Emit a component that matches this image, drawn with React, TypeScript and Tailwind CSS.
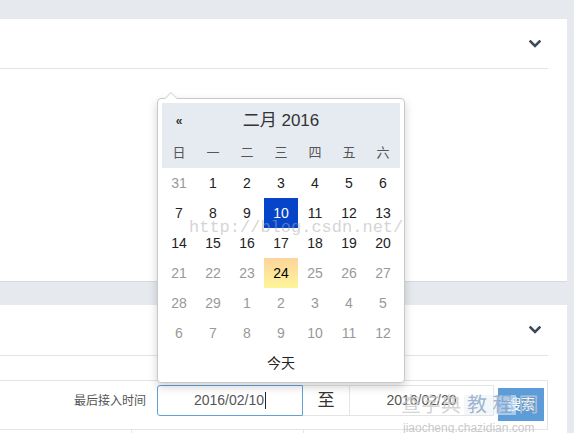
import React from 'react';

const FONT = { fontFamily: '"Liberation Sans", "Noto Sans CJK SC", sans-serif' };

type Day = { n: number; muted: boolean; active?: boolean; today?: boolean };

const WEEKDAYS = ['日', '一', '二', '三', '四', '五', '六'];

// Feb 2016, max selectable date 2016/02/20
const ROWS: Day[][] = (() => {
  const cells: Day[] = [{ n: 31, muted: true }];
  for (let d = 1; d <= 29; d++) cells.push({ n: d, muted: d > 20, active: d === 10, today: d === 24 });
  for (let d = 1; d <= 12; d++) cells.push({ n: d, muted: true });
  const rows: Day[][] = [];
  for (let i = 0; i < 6; i++) rows.push(cells.slice(i * 7, i * 7 + 7));
  return rows;
})();

function Chevron() {
  return (
    <svg width="12" height="8" viewBox="0 0 12 8" aria-hidden>
      <path d="M1.5 1.5 L6 6 L10.5 1.5" fill="none" stroke="#3d4a57" strokeWidth="2.6" strokeLinecap="square" />
    </svg>
  );
}

function Calendar() {
  return (
    <div className="absolute left-[157px] top-[98px] w-[248px] rounded-[4px] border border-[#c9c9c9] bg-white p-[4px] shadow-[0_4px_10px_rgba(0,0,0,0.18)]">
      {/* caret */}
      <div className="absolute -top-[7px] left-[6px] h-0 w-0 border-x-[7px] border-b-[7px] border-x-transparent border-b-[#c9c9c9]" />
      <div className="absolute -top-[6px] left-[7px] h-0 w-0 border-x-[6px] border-b-[6px] border-x-transparent border-b-white" />

      <div className="bg-[#e6ebf2]">
        <div className="flex h-[35px] items-center">
          <div className="flex w-[34px] justify-center text-[12px] font-bold text-[#333]">«</div>
          <div className="flex w-[170px] justify-center text-[17px] text-[#333]">二月 2016</div>
          <div className="w-[34px]" />
        </div>
        <div className="flex h-[30px] items-center">
          {WEEKDAYS.map((w) => (
            <div key={w} className="flex w-[34px] justify-center text-[13px] text-[#555]">
              {w}
            </div>
          ))}
        </div>
      </div>

      {ROWS.map((row, i) => (
        <div key={i} className="flex h-[30px]">
          {row.map((d, j) => (
            <div
              key={j}
              className={`flex w-[34px] items-center justify-center text-[14px] ${
                d.active
                  ? 'bg-[#0645c9] text-white'
                  : d.today
                    ? 'bg-gradient-to-b from-[#fdd49a] to-[#fdf59a] text-black'
                    : d.muted
                      ? 'text-[#999]'
                      : 'text-[#222]'
              }`}
            >
              {d.n}
            </div>
          ))}
        </div>
      ))}

      <div className="flex h-[30px] items-center justify-center text-[14px] text-[#222]">今天</div>
    </div>
  );
}

export default function App() {
  return (
    <div className="relative flex h-[433px] w-[574px] flex-col overflow-hidden bg-[#e6e9ee] pt-[19px]" style={FONT}>
      {/* panel 1 */}
      <section className="h-[264px] w-[567px] border-b border-[#d6dae0] bg-white">
        <div className="mr-[19px] flex h-[50px] items-center justify-end border-b border-[#e4e4e4] pr-[7px]">
          <Chevron />
        </div>
      </section>

      {/* panel 2 */}
      <section className="mt-[23px] flex w-[567px] flex-1 flex-col bg-white">
        <div className="mr-[19px] flex h-[51px] items-center justify-end border-b border-[#e4e4e4] pr-[7px]">
          <Chevron />
        </div>
        <div className="h-[24px]" />
        <div className="flex h-[49px] w-[548px] items-start border-r border-t border-[#e4e4e4] pt-[4px]">
          <div className="flex h-[31px] w-[146px] items-center justify-end text-[12px] text-[#555]">最后接入时间</div>
          <div className="ml-[11px] flex h-[31px]">
            <div className="flex w-[146px] items-center justify-center rounded-l-[3px] border border-[#62a0dc] text-[14px] text-[#555]">
              2016/02/10<span className="ml-[1px] inline-block h-[17px] w-px bg-[#222]" />
            </div>
            <div className="flex w-[46px] items-center justify-center border-y border-[#e4e4e4] text-[17px] text-[#333]">至</div>
            <div className="flex w-[145px] items-center justify-center border border-[#e4e4e4] text-[14px] text-[#555]">
              2016/02/20
            </div>
          </div>
          <div className="ml-[4px] mt-[3px] flex h-[33px] w-[46px] items-center justify-center bg-[#5b9cd9] text-[14px] text-white">
            搜索
          </div>
        </div>
        <div className="flex h-[4px] w-[548px] border-t border-[#e4e4e4]">
          <div className="w-[132px] border-r border-[#e4e4e4]" />
          <div className="w-[172px] border-r border-[#e4e4e4]" />
        </div>
      </section>

      <Calendar />

      {/* watermarks */}
      <div
        className="pointer-events-none absolute left-[189px] top-[219px] text-[17px] leading-none text-[rgba(170,170,170,0.5)]"
        style={{ fontFamily: '"Liberation Mono", monospace' }}
      >
        http://blog.csdn.net/
      </div>
      <div className="pointer-events-none absolute left-[401px] top-[395px] flex items-center text-[20px] leading-none text-[rgba(200,200,200,0.8)]">
        <span>查字典</span>
        <span className="ml-[3px] bg-[rgba(235,240,246,0.55)] px-[3px] text-[rgba(120,150,190,0.7)]">教 程</span>
        <span className="ml-[3px]">网</span>
      </div>
      <div className="pointer-events-none absolute left-[403px] top-[422px] text-[12px] leading-none text-[rgba(190,190,190,0.85)]">
        jiaocheng.chazidian.com
      </div>
    </div>
  );
}
